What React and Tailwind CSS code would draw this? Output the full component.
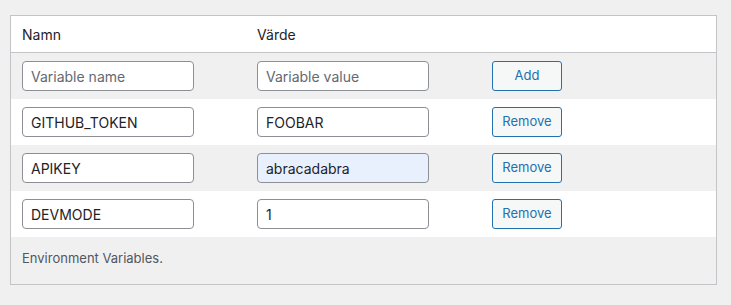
const rows = [
  { name: 'GITHUB_TOKEN', value: 'FOOBAR' },
  { name: 'APIKEY', value: 'abracadabra', autofill: true },
  { name: 'DEVMODE', value: '1' },
]

const font = { fontFamily: 'Inter, "Noto Sans", sans-serif' }

function Field({ value, placeholder, autofill }) {
  return (
    <input
      readOnly
      defaultValue={value}
      placeholder={placeholder}
      className={`w-[172px] h-[30px] rounded-[4px] border border-[#8c8f94] px-[8px] text-[14px] text-[#1d2327] placeholder:text-[#646970] outline-none ${autofill ? 'bg-[#e8f0fe]' : 'bg-white'}`}
    />
  )
}

function Button({ children }) {
  return (
    <button className="w-[70px] h-[30px] rounded-[3px] border border-[#2271b1] bg-[#f6f7f7] text-[13px] text-[#2271b1]">
      {children}
    </button>
  )
}

export default function App() {
  return (
    <div className="min-h-[305px] bg-[#f0f0f1] pt-[15px] pl-[10px] pr-[14px]" style={font}>
      <div className="border border-[#c3c4c7] bg-[#f0f0f1]">
        {/* header */}
        <div className="grid grid-cols-3 h-[37px] items-center bg-white border-b border-[#c3c4c7] text-[14px] text-[#1d2327]">
          <div className="px-[11px]">Namn</div>
          <div className="px-[11px]">Värde</div>
          <div />
        </div>

        {/* new variable row */}
        <div className="grid grid-cols-3 h-[46px] items-center bg-[#f0f0f1]">
          <div className="px-[11px]"><Field placeholder="Variable name" /></div>
          <div className="px-[11px]"><Field placeholder="Variable value" /></div>
          <div className="px-[11px]"><Button>Add</Button></div>
        </div>

        {rows.map((row, i) => (
          <div
            key={row.name}
            className={`grid grid-cols-3 h-[46px] items-center ${i % 2 === 0 ? 'bg-white' : 'bg-[#f0f0f1]'}`}
          >
            <div className="px-[11px]"><Field value={row.name} /></div>
            <div className="px-[11px]"><Field value={row.value} autofill={row.autofill} /></div>
            <div className="px-[11px]"><Button>Remove</Button></div>
          </div>
        ))}

        <div className="h-[47px] px-[11px] pt-[12px] text-[13px] text-[#50575e]">Environment Variables.</div>
      </div>
    </div>
  )
}
